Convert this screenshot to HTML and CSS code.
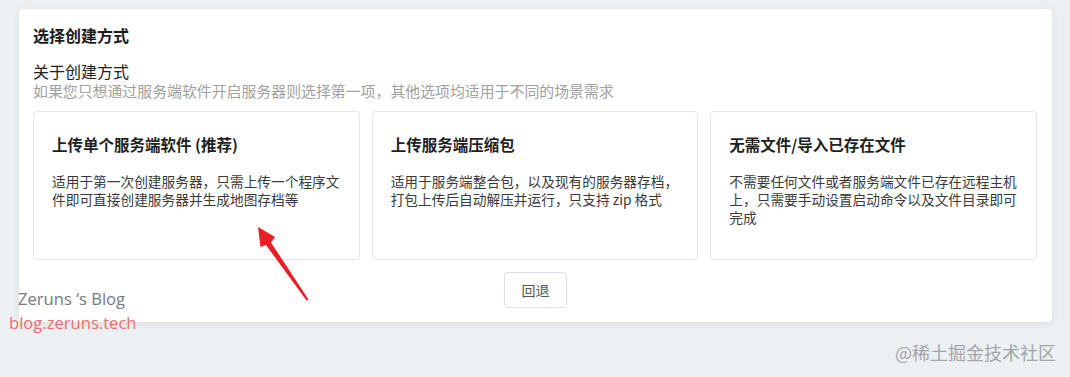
FILE: index.html
```html
<!DOCTYPE html>
<html lang="zh-CN">
<head>
    <meta charset="UTF-8">
    <title>选择创建方式</title>
    <link rel="stylesheet" href="styles.css">
</head>
<body>
    <div class="panel">
        <h2>选择创建方式</h2>

        <div class="about">
            <p class="about-title">关于创建方式</p>
            <p class="about-sub">如果您只想通过服务端软件开启服务器则选择第一项，其他选项均适用于不同的场景需求</p>
        </div>

        <!-- 创建方式 -->
        <div class="cards">
            <div class="card">
                <h3>上传单个服务端软件 (推荐)</h3>
                <p>适用于第一次创建服务器，只需上传一个程序文件即可直接创建服务器并生成地图存档等</p>
            </div>
            <div class="card">
                <h3>上传服务端压缩包</h3>
                <p>适用于服务端整合包，以及现有的服务器存档，打包上传后自动解压并运行，只支持 zip 格式</p>
            </div>
            <div class="card">
                <h3>无需文件/导入已存在文件</h3>
                <p>不需要任何文件或者服务端文件已存在远程主机上，只需要手动设置启动命令以及文件目录即可完成</p>
            </div>
        </div>

        <div class="actions">
            <button>回退</button>
        </div>
    </div>

    <!-- 标注箭头 -->
    <svg class="arrow" width="62" height="84" viewBox="0 0 62 84">
        <polygon points="8,7 25,17 21,22.5 58.5,79.5 56.5,80.5 16,25 10.5,27" fill="#ea1f26"/>
    </svg>

    <div class="mark-blog">
        <span class="mark-name">Zeruns ‘s Blog</span>
        <span class="mark-url">blog.zeruns.tech</span>
    </div>
    <div class="mark-site">@稀土掘金技术社区</div>
</body>
</html>
```

FILE: styles.css
```css
* { margin: 0; padding: 0; box-sizing: border-box; }
body {
    font-family: "Noto Sans CJK SC", sans-serif;
    background: #edf0f3;
    height: 377px;
    overflow: hidden;
    position: relative;
}
.panel {
    margin: 9px 18px 0 19px;
    background: white;
    border-radius: 4px;
    box-shadow: 0 2px 8px rgba(0,0,0,0.08);
    padding: 14px 15px 14px 14px;
}
h2 {
    font-size: 16px;
    line-height: 24px;
    font-weight: 700;
    color: #1a1a1a;
}
.about { margin-top: 15px; }
.about-title { font-size: 16px; line-height: 19px; color: #222; }
.about-sub { font-size: 14.9px; line-height: 19px; color: #a0a0a0; }
.cards {
    display: grid;
    grid-template-columns: repeat(3, 1fr);
    gap: 12px;
    margin-top: 11px;
}
.card {
    height: 149px;
    border: 1px solid #e3e6eb;
    border-radius: 4px;
    padding: 21px 18px 0 18px;
}
.card h3 {
    font-size: 15.5px;
    line-height: 22px;
    font-weight: 700;
    color: #1f1f1f;
}
.card p {
    margin-top: 17px;
    font-size: 13.7px;
    line-height: 18px;
    color: #3a3a3a;
}
.actions {
    display: flex;
    justify-content: center;
    margin-top: 12px;
}
button {
    width: 63px;
    height: 36px;
    background: white;
    border: 1px solid #dcdfe6;
    border-radius: 4px;
    font-family: "Noto Sans CJK SC", sans-serif;
    font-size: 14px;
    color: #555;
    margin-left: 1px;
}
.arrow { position: absolute; left: 250px; top: 220px; }
.mark-blog {
    position: absolute;
    left: 9px;
    top: 287px;
    display: flex;
    flex-direction: column;
    font-family: "Open Sans", sans-serif;
    font-size: 16.6px;
    line-height: 24px;
}
.mark-name { color: #7a7a7a; padding-left: 9px; }
.mark-url { color: #e6716f; }
.mark-site {
    position: absolute;
    left: 895px;
    top: 340px;
    font-size: 18px;
    line-height: 24px;
    color: #a3a6a9;
}
```
